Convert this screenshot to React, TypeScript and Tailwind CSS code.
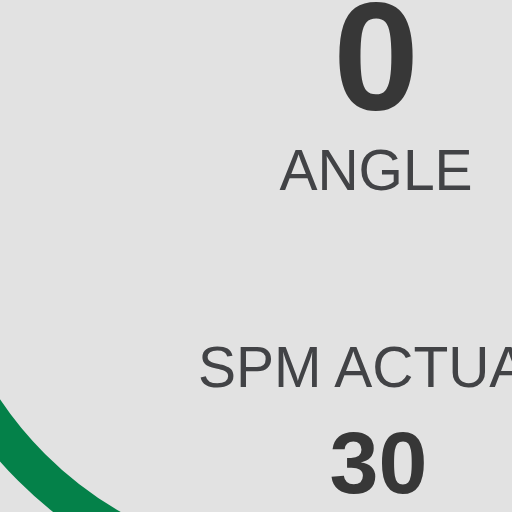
type ReadingProps = { label: string; value: number };

function AngleReading({ label, value }: ReadingProps) {
  return (
    <section className="flex flex-col items-center gap-7">
      <p className="text-[154px] leading-[114px] font-bold text-[#373737]">{value}</p>
      <h2 className="text-[57px] leading-[56px]">{label}</h2>
    </section>
  );
}

function SpeedReading({ label, value }: ReadingProps) {
  return (
    <section className="flex w-max flex-col items-center gap-6">
      <h2 className="text-[57px] leading-[56px] whitespace-nowrap">{label}</h2>
      <p className="text-[88px] leading-[88px] font-bold text-[#373737]">{value}</p>
    </section>
  );
}

export default function App() {
  return (
    <main className="relative min-h-screen overflow-hidden bg-[#e2e2e2] font-['Liberation_Sans',Arial,sans-serif] text-[#424346]">
      {/* Dial ring behind the readings */}
      <svg
        className="absolute top-0 left-0 size-[512px]"
        viewBox="0 0 512 512"
        fill="none"
        aria-hidden="true"
      >
        <path d="M-80 198A381 381 0 0 0 301 579" stroke="#048149" strokeWidth="38" />
      </svg>
      <div className="relative flex pl-[198px]">
        <div className="flex w-[356px] shrink-0 flex-col gap-[141px]">
          <AngleReading label="ANGLE" value={0} />
          <SpeedReading label="SPM ACTUAL" value={30} />
        </div>
      </div>
    </main>
  );
}
